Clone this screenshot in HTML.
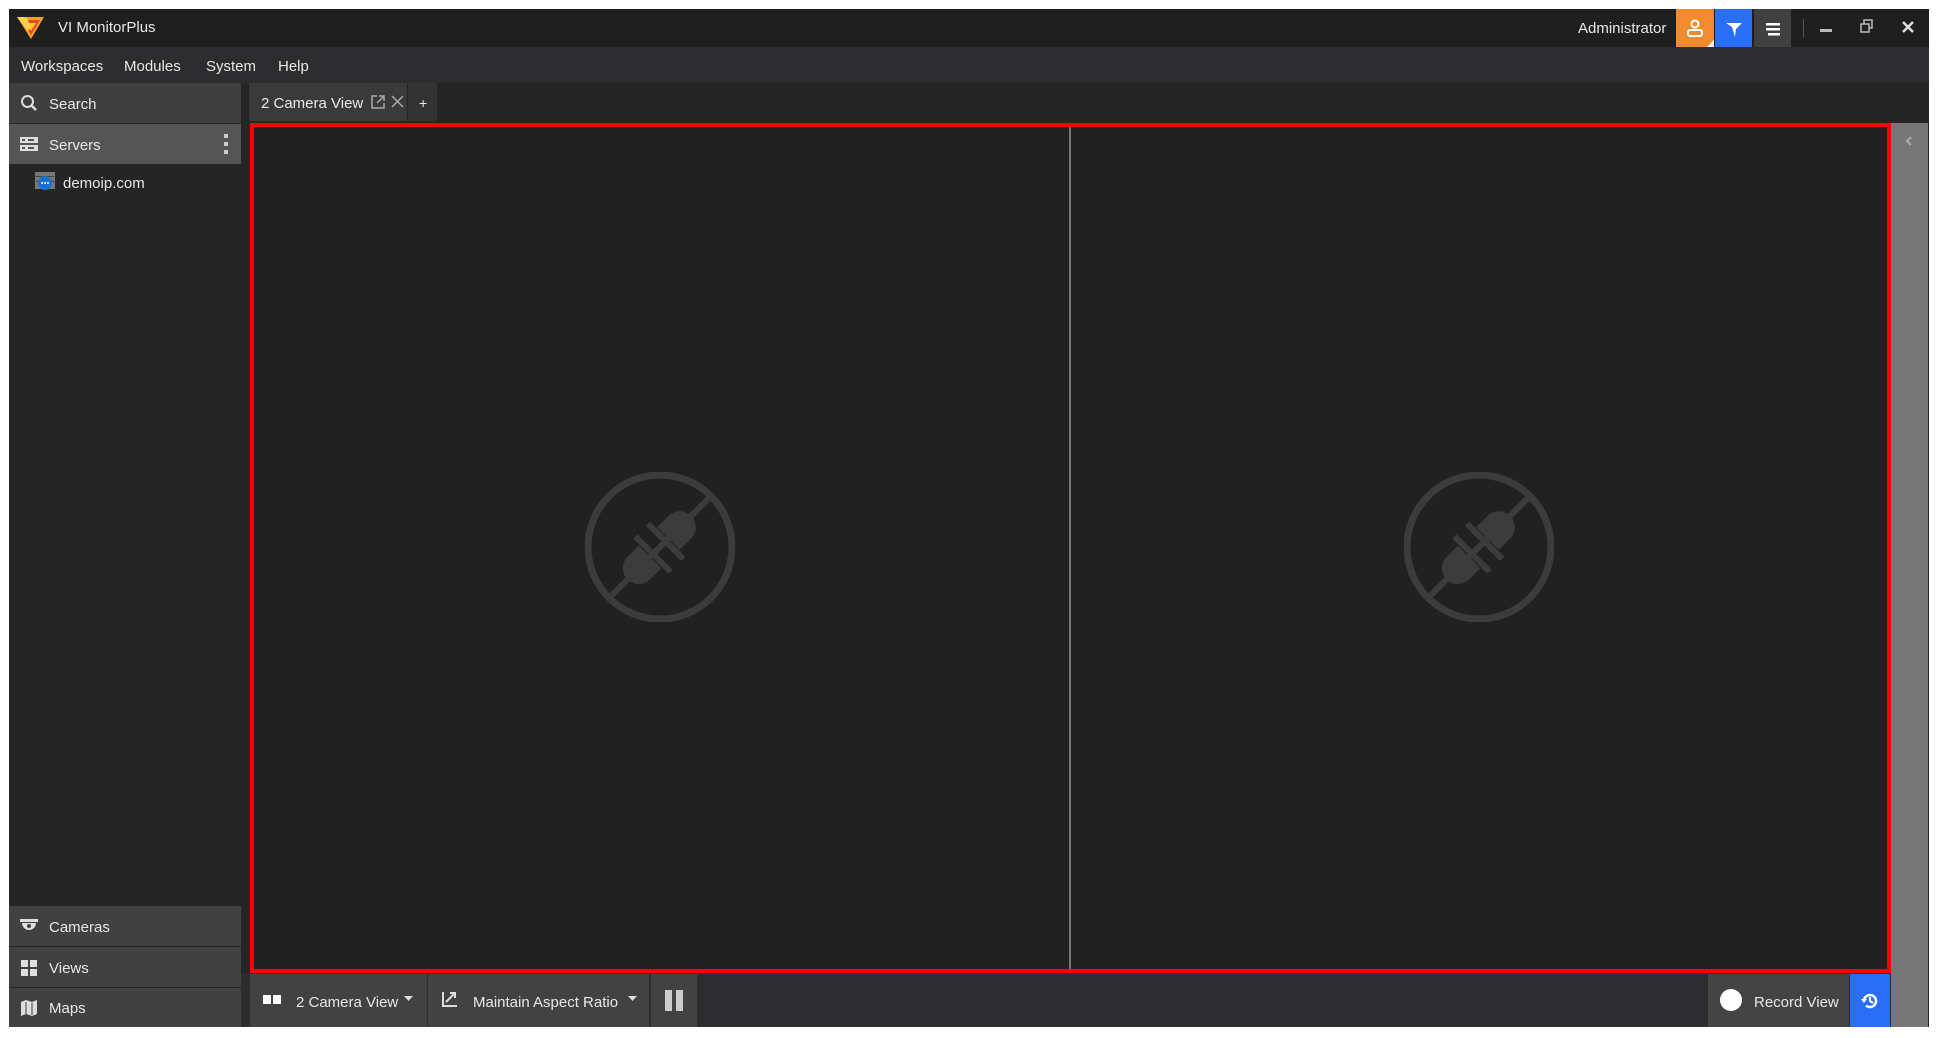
<!DOCTYPE html>
<html><head><meta charset="utf-8"><style>
*{margin:0;padding:0;box-sizing:border-box}
body{width:1938px;height:1038px;background:#fff;font-family:"Segoe UI","Liberation Sans",sans-serif;color:#e8e8e8;overflow:hidden;position:relative}
.a{position:absolute}
.t{font-size:15px;white-space:nowrap;margin-top:2px}
</style></head><body>
<div class="a" style="left:9px;top:9px;width:1920px;height:1018px;background:#252526"></div>
<!-- title bar -->
<div class="a" style="left:9px;top:9px;width:1920px;height:38px;background:#1f1f1f"></div>
<svg class="a" style="left:16px;top:14px" width="30" height="26" viewBox="0 0 30 26"><polygon points="1,3 28,3 15,25" fill="#f7a12b"/><polygon points="6,6 24,6 15,21" fill="#e8491d"/><polygon points="9,9 20,9 15,17" fill="#f7c23b"/><polygon points="1,3 10,3 15,12 12,17" fill="#fbd24a"/></svg>
<div class="a t" style="left:58px;top:17px">VI MonitorPlus</div>
<div class="a t" style="left:1578px;top:18px">Administrator</div>
<div class="a" style="left:1676px;top:9px;width:38px;height:38px;background:#f48a2e"></div>
<svg class="a" style="left:1676px;top:9px" width="38" height="38"><circle cx="19" cy="15" r="3.5" fill="none" stroke="#fff" stroke-width="2"/><rect x="12" y="21" width="14" height="6" rx="2" fill="none" stroke="#fff" stroke-width="2"/><polygon points="31,38 38,38 38,31" fill="#fff"/></svg>
<div class="a" style="left:1715px;top:9px;width:37px;height:38px;background:#2b6ef6"></div>
<svg class="a" style="left:1715px;top:9px" width="37" height="38"><polygon points="11,14 27,14 21,20 20,28 17,18" fill="#fff"/></svg>
<div class="a" style="left:1754px;top:9px;width:37px;height:38px;background:#404040"></div>
<svg class="a" style="left:1754px;top:9px" width="37" height="38"><rect x="12" y="14" width="14" height="2.5" fill="#fff"/><rect x="12" y="19" width="14" height="2.5" fill="#fff"/><rect x="14" y="24" width="12" height="2.5" fill="#fff"/></svg>
<div class="a" style="left:1803px;top:19px;width:1px;height:19px;background:#555"></div>
<div class="a" style="left:1820px;top:29px;width:12px;height:3px;background:#bbb"></div>
<svg class="a" style="left:1859px;top:18px" width="16" height="16"><rect x="5" y="2" width="8" height="8" fill="none" stroke="#bbb" stroke-width="1.5"/><rect x="2" y="6" width="8" height="8" fill="#1f1f1f" stroke="#bbb" stroke-width="1.5"/></svg>
<svg class="a" style="left:1901px;top:20px" width="14" height="14"><path d="M2 2L12 12M12 2L2 12" stroke="#ddd" stroke-width="2.5"/></svg>
<!-- menu -->
<div class="a" style="left:9px;top:47px;width:1920px;height:36px;background:#2d2d30"></div>
<div class="a t" style="left:21px;top:56px">Workspaces</div>
<div class="a t" style="left:124px;top:56px">Modules</div>
<div class="a t" style="left:206px;top:56px">System</div>
<div class="a t" style="left:278px;top:56px">Help</div>
<!-- left panel -->
<div class="a" style="left:9px;top:83px;width:232px;height:40px;background:#3f3f3f"></div>
<svg class="a" style="left:20px;top:94px" width="18" height="18"><circle cx="7.5" cy="7.5" r="5.5" fill="none" stroke="#ddd" stroke-width="2"/><path d="M11.5 11.5L16 16" stroke="#ddd" stroke-width="2.5"/></svg>
<div class="a t" style="left:49px;top:94px">Search</div>
<div class="a" style="left:9px;top:124px;width:232px;height:40px;background:#555"></div>
<svg class="a" style="left:20px;top:137px" width="18" height="14"><rect x="0" y="0" width="18" height="6" fill="#ddd"/><rect x="0" y="8" width="18" height="6" fill="#ddd"/><rect x="2" y="2" width="3" height="2" fill="#555"/><rect x="2" y="10" width="3" height="2" fill="#555"/><rect x="8" y="2" width="6" height="2" fill="#555"/><rect x="8" y="10" width="6" height="2" fill="#555"/></svg>
<div class="a t" style="left:49px;top:135px">Servers</div>
<div class="a" style="left:224px;top:134px;width:4px;height:4px;background:#ccc"></div>
<div class="a" style="left:224px;top:142px;width:4px;height:4px;background:#ccc"></div>
<div class="a" style="left:224px;top:150px;width:4px;height:4px;background:#ccc"></div>
<svg class="a" style="left:35px;top:172px" width="20" height="20"><rect x="0" y="0" width="20" height="17" fill="#777"/><rect x="1" y="4" width="18" height="1" fill="#444"/><rect x="1" y="9" width="18" height="1" fill="#444"/><circle cx="10" cy="11" r="7" fill="#1b6fd1"/><circle cx="7" cy="11" r="1" fill="#fff"/><circle cx="10" cy="11" r="1" fill="#fff"/><circle cx="13" cy="11" r="1" fill="#fff"/></svg>
<div class="a t" style="left:63px;top:173px">demoip.com</div>
<div class="a" style="left:9px;top:906px;width:232px;height:40px;background:#414141"></div>
<div class="a" style="left:9px;top:947px;width:232px;height:40px;background:#414141"></div>
<div class="a" style="left:9px;top:988px;width:232px;height:39px;background:#414141"></div>
<svg class="a" style="left:20px;top:919px" width="18" height="14"><rect x="0" y="0" width="18" height="3" fill="#ddd"/><path d="M2 4H16A7 7 0 0 1 2 4Z" fill="#ddd"/><circle cx="9" cy="7" r="2" fill="#414141"/></svg>
<div class="a t" style="left:49px;top:917px">Cameras</div>
<svg class="a" style="left:21px;top:960px" width="16" height="16"><rect x="0" y="0" width="7" height="7" fill="#ddd"/><rect x="9" y="0" width="7" height="7" fill="#ddd"/><rect x="0" y="9" width="7" height="7" fill="#ddd"/><rect x="9" y="9" width="7" height="7" fill="#ddd"/></svg>
<div class="a t" style="left:49px;top:958px">Views</div>
<svg class="a" style="left:21px;top:1000px" width="16" height="16"><path d="M0 2L5 0L11 2L16 0V14L11 16L5 14L0 16Z" fill="#ddd"/><path d="M5 2V14M11 3V15" stroke="#414141" stroke-width="1"/></svg>
<div class="a t" style="left:49px;top:998px">Maps</div>
<!-- tabs -->
<div class="a" style="left:249px;top:83px;width:158px;height:38px;background:#3a3a3a"></div>
<div class="a t" style="left:261px;top:93px">2 Camera View</div>
<svg class="a" style="left:370px;top:94px" width="16" height="16"><path d="M7 2H2V14H14V9" fill="none" stroke="#aaa" stroke-width="1.5"/><path d="M9 2H14V7M14 2L7 9" fill="none" stroke="#aaa" stroke-width="1.5"/></svg>
<svg class="a" style="left:391px;top:95px" width="13" height="13"><path d="M1 1L12 12M12 1L1 12" stroke="#aaa" stroke-width="1.5"/></svg>
<div class="a" style="left:408px;top:83px;width:29px;height:38px;background:#333"></div>
<div class="a t" style="left:419px;top:93px;font-size:14px">+</div>
<!-- main view -->
<div class="a" style="left:250px;top:123px;width:1641px;height:850px;border:4px solid #f00;background:#212121"></div>
<div class="a" style="left:1069px;top:127px;width:2px;height:842px;background:#777"></div>
<div class="a" style="left:1891px;top:123px;width:37px;height:904px;background:#777"></div>
<svg class="a" style="left:1902px;top:134px" width="14" height="14"><path d="M9 3L5 7L9 11" fill="none" stroke="#aaa" stroke-width="2"/></svg>
<svg class="a" style="left:585px;top:472px" width="150" height="150" viewBox="0 0 150 150"><g fill="#3c3c3c" stroke="#3c3c3c"><circle cx="75" cy="75" r="72" fill="none" stroke-width="7"/><path d="M126 24L24 126" stroke-width="6"/><g transform="rotate(-45 75 75)" stroke="none"><path d="M45 59H61V91H45A16 16 0 0 1 45 59Z"/><rect x="62" y="50" width="6" height="50" rx="2"/><rect x="80" y="50" width="6" height="50" rx="2"/><path d="M87 59H103A16 16 0 0 1 103 91H87Z"/></g></g></svg>
<svg class="a" style="left:1404px;top:472px" width="150" height="150" viewBox="0 0 150 150"><g fill="#3c3c3c" stroke="#3c3c3c"><circle cx="75" cy="75" r="72" fill="none" stroke-width="7"/><path d="M126 24L24 126" stroke-width="6"/><g transform="rotate(-45 75 75)" stroke="none"><path d="M45 59H61V91H45A16 16 0 0 1 45 59Z"/><rect x="62" y="50" width="6" height="50" rx="2"/><rect x="80" y="50" width="6" height="50" rx="2"/><path d="M87 59H103A16 16 0 0 1 103 91H87Z"/></g></g></svg>
<!-- bottom toolbar -->
<div class="a" style="left:241px;top:973px;width:1650px;height:54px;background:#2d2d30"></div>
<div class="a" style="left:250px;top:974px;width:177px;height:53px;background:#424242"></div>
<div class="a" style="left:428px;top:974px;width:221px;height:53px;background:#424242"></div>
<div class="a" style="left:651px;top:974px;width:46px;height:53px;background:#424242"></div>
<div class="a" style="left:263px;top:995px;width:8px;height:9px;background:#fff"></div>
<div class="a" style="left:273px;top:995px;width:8px;height:9px;background:#fff"></div>
<div class="a t" style="left:296px;top:992px">2 Camera View</div>
<svg class="a" style="left:404px;top:996px" width="10" height="6"><path d="M0 0H9L4.5 5Z" fill="#ddd"/></svg>
<svg class="a" style="left:441px;top:990px" width="18" height="18"><path d="M2 2V16H16" fill="none" stroke="#ddd" stroke-width="2"/><path d="M5 12L14 3M9 3H14V8" fill="none" stroke="#ddd" stroke-width="2"/></svg>
<div class="a t" style="left:473px;top:992px">Maintain Aspect Ratio</div>
<svg class="a" style="left:628px;top:996px" width="10" height="6"><path d="M0 0H9L4.5 5Z" fill="#ddd"/></svg>
<div class="a" style="left:665px;top:990px;width:7px;height:21px;background:#ccc"></div>
<div class="a" style="left:676px;top:990px;width:7px;height:21px;background:#ccc"></div>
<div class="a" style="left:1708px;top:974px;width:141px;height:53px;background:#444"></div>
<div class="a" style="left:1720px;top:989px;width:22px;height:22px;border-radius:50%;background:#fff"></div>
<div class="a t" style="left:1754px;top:992px">Record View</div>
<div class="a" style="left:1850px;top:974px;width:40px;height:53px;background:#2b6ef6"></div>
<svg class="a" style="left:1860px;top:991px" width="20" height="20" viewBox="0 0 20 20"><path d="M4 10A6 6 0 1 1 6 14.5" fill="none" stroke="#fff" stroke-width="2.5"/><path d="M1 8L4 12L7 8Z" fill="#fff"/><path d="M10 6V10L13 12" fill="none" stroke="#fff" stroke-width="2"/></svg>
</body></html>
